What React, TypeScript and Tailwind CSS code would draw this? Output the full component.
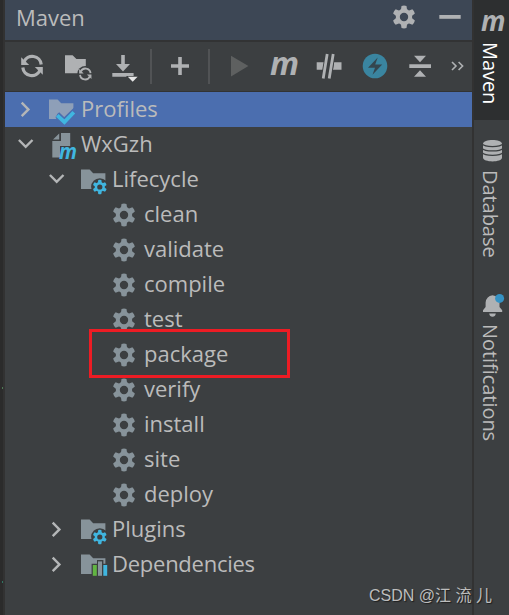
import { type ReactNode } from "react";

type IconKind = "profiles" | "project" | "phases" | "goal" | "dependencies";

type TreeNode = {
  label: string;
  level: 0 | 1 | 2;
  icon: IconKind;
  state?: "open" | "closed";
  selected?: boolean;
};

const NODES: TreeNode[] = [
  { label: "Profiles", level: 0, icon: "profiles", state: "closed", selected: true },
  { label: "WxGzh", level: 0, icon: "project", state: "open" },
  { label: "Lifecycle", level: 1, icon: "phases", state: "open" },
  { label: "clean", level: 2, icon: "goal" },
  { label: "validate", level: 2, icon: "goal" },
  { label: "compile", level: 2, icon: "goal" },
  { label: "test", level: 2, icon: "goal" },
  { label: "package", level: 2, icon: "goal" },
  { label: "verify", level: 2, icon: "goal" },
  { label: "install", level: 2, icon: "goal" },
  { label: "site", level: 2, icon: "goal" },
  { label: "deploy", level: 2, icon: "goal" },
  { label: "Plugins", level: 1, icon: "phases", state: "closed" },
  { label: "Dependencies", level: 1, icon: "dependencies", state: "closed" },
];

const INDENT = { 0: "pl-[5px]", 1: "pl-[36px]", 2: "pl-[68px]" };

const TEETH = [0, 60, 120, 180, 240, 300];

const Gear = ({ cx, cy, scale = 1, color }: { cx: number; cy: number; scale?: number; color: string }) => (
  <g transform={`translate(${cx} ${cy}) scale(${scale})`}>
    <circle r="6.2" fill="none" stroke={color} strokeWidth="4" />
    {TEETH.map((angle) => (
      <path key={angle} d="M-3.1 -7L-2.5 -11.1Q0 -11.9 2.5 -11.1L3.1 -7Z" fill={color} transform={`rotate(${angle})`} />
    ))}
  </g>
);

const Refresh = ({ cx, cy, scale = 1 }: { cx: number; cy: number; scale?: number }) => (
  <g transform={`translate(${cx} ${cy}) scale(${scale})`}>
    {[0, 180].map((angle) => (
      <g key={angle} transform={`rotate(${angle})`}>
        <path d="M-8 -4.2A9 9 0 0 1 9.2 -1.5" fill="none" stroke="#afb1b3" strokeWidth="3.2" />
        <path d="M-10.8 -8.8V-1H-2.8Z" fill="#afb1b3" />
      </g>
    ))}
  </g>
);

const Letter = ({ x, y, size, width, color }: { x: number; y: number; size: number; width: number; color: string }) => (
  <text
    x={x}
    y={y}
    fontSize={size}
    textLength={width}
    lengthAdjust="spacingAndGlyphs"
    fill={color}
    className="font-['Open_Sans','Noto_Sans',sans-serif] font-bold italic"
  >
    m
  </text>
);

const Tool = ({ children }: { children: ReactNode }) => (
  <svg viewBox="0 0 46 49" className="h-[49px] w-[46px] shrink-0 overflow-visible">
    {children}
  </svg>
);

const Separator = ({ className }: { className: string }) => (
  <div className={`h-[35px] w-[2px] shrink-0 bg-[#515355] ${className}`} />
);

const Toolbar = () => (
  <div className="flex h-[49px] items-center pl-1">
    <Tool>
      <Refresh cx={23} cy={24} />
    </Tool>
    <Tool>
      <path d="M10 13.2H17.6L21.4 17H30.8V31.3H10Z" fill="#afb1b3" />
      <circle cx="30.3" cy="32" r="8" fill="#3c3f41" />
      <Refresh cx={30.3} cy={32} scale={0.57} />
    </Tool>
    <Tool>
      <path d="M20.2 13H23.8V22H29L22 29.5L15 22H20.2ZM11.3 31H32.6V34.7H11.3Z" fill="#afb1b3" />
      <path d="M25 34H38.5L31.5 41.2Z" fill="#3c3f41" />
      <path d="M26.8 34.7H36.6L31.7 39.8Z" fill="#e6e6e6" />
    </Tool>
    <Separator className="ml-[3px]" />
    <div className="ml-[5px] flex">
      <Tool>
        <path d="M21.2 15H24.8V22.2H32V25.8H24.8V33H21.2V25.8H14V22.2H21.2Z" fill="#afb1b3" />
      </Tool>
    </div>
    <Separator className="ml-[5px]" />
    <div className="ml-[6px] flex">
      <Tool>
        <path d="M15 13.7L32.4 24L15 34.4Z" fill="#5e6060" />
      </Tool>
      <Tool>
        <Letter x={8} y={33} size={33} width={29} color="#afb1b3" />
      </Tool>
      <Tool>
        <path d="M8.7 20.3H17V27.7H8.7ZM26 20.3H33.5V27.7H25Z" fill="#afb1b3" />
        <path d="M19.2 12L15.2 36.4M25.2 12L21.2 36.4" stroke="#3c3f41" strokeWidth="4.6" />
        <path d="M19.2 12L15.2 36.4M25.2 12L21.2 36.4" stroke="#afb1b3" strokeWidth="2.8" />
      </Tool>
      <Tool>
        <circle cx="21" cy="24" r="12.3" fill="#3a85a0" />
        <path d="M23.7 15.5L14 25.8H21L18.5 32.8L28.2 22.5H21.2Z" fill="#34464f" />
      </Tool>
      <Tool>
        <path d="M14 13.7H26L20 20.2ZM9.3 22.2H31V26H9.3ZM20 28.2L26 34.7H14Z" fill="#afb1b3" />
      </Tool>
    </div>
    <svg viewBox="0 0 20 49" className="-ml-[1px] h-[49px] w-5 shrink-0">
      <path d="M7 20L11 24L7 28M13.6 20L17.6 24L13.6 28" fill="none" stroke="#afb1b3" strokeWidth="1.6" />
    </svg>
  </div>
);

const Chevron = ({ state }: { state?: "open" | "closed" }) => (
  <svg viewBox="0 0 32 35" className="h-[35px] w-8 shrink-0">
    {state === "closed" && (
      <path d="M11.7 10.7L18.4 17.4L11.7 24.1" fill="none" stroke="#b4b6b7" strokeWidth="2.4" />
    )}
    {state === "open" && (
      <path d="M8.9 13L15.7 19.8L22.5 13" fill="none" stroke="#b4b6b7" strokeWidth="2.4" />
    )}
  </svg>
);

const FOLDER = "M2 7.4H10.6L14.2 11.2H26.4V27H2Z";

const NodeIcon = ({ kind }: { kind: IconKind }) => (
  <svg viewBox="0 0 30 35" className="h-[35px] w-[30px] shrink-0 overflow-visible">
    {kind === "profiles" && (
      <>
        <path d={FOLDER} fill="#8e9fb8" />
        <path d="M11 21.4L17.2 27.5L29 16V31H11L8.5 25Z" fill="#4b6eaf" />
        <path d="M11 21.4L17.2 27.5L29 16" fill="none" stroke="#4b6eaf" strokeWidth="3.4" />
        <path d="M10.2 23.4L17.4 30L26.8 20.2" fill="none" stroke="#40b6e0" strokeWidth="3.8" />
      </>
    )}
    {kind === "project" && (
      <>
        <path d="M14 6H23.2V19H13V30.4H5.3V14H14ZM12.2 6.4V12.4H6Z" fill="#87939a" />
        <Letter x={12} y={31.8} size={21} width={18} color="#40b6e0" />
      </>
    )}
    {kind === "phases" && (
      <g transform="translate(1 0)">
        <path d={FOLDER} fill="#87939a" />
        <circle cx="20.8" cy="25" r="8.7" fill="#3c3f41" />
        <Gear cx={20.8} cy={25} scale={0.62} color="#40b6e0" />
      </g>
    )}
    {kind === "goal" && <Gear cx={14} cy={18} color="#87939a" />}
    {kind === "dependencies" && (
      <g transform="translate(1 0)">
        <path d={FOLDER} fill="#87939a" />
        <path d="M12.6 16.8H18V13H24.4V16.8H29V31H12.6Z" fill="#3c3f41" />
        <path d="M13.8 18H17.8V28.8H13.8Z" fill="#62b543" />
        <path d="M19 14.4H23V28.8H19Z" fill="#87939a" />
        <path d="M24.3 18H28.2V28.8H24.3Z" fill="#40b6e0" />
      </g>
    )}
  </svg>
);

const TreeRow = ({ node }: { node: TreeNode }) => (
  <div className={`flex h-[35px] items-start ${INDENT[node.level]} ${node.selected ? "bg-[#4b6eaf]" : ""}`}>
    <Chevron state={node.state} />
    <div className="ml-[5px] flex">
      <NodeIcon kind={node.icon} />
    </div>
    <span
      className={`ml-[4px] text-[22px] leading-[33px] whitespace-nowrap ${node.label.length > 9 ? "tracking-[-0.25px]" : ""}`}
    >
      {node.label}
    </span>
  </div>
);

const SideLabel = ({ children }: { children: string }) => (
  <span className="text-[20px] leading-[33px] tracking-[-0.05px] whitespace-nowrap [writing-mode:vertical-rl]">
    {children}
  </span>
);

const SideBar = () => (
  <div className="flex w-[35px] shrink-0 flex-col bg-[#3c3f41]">
    <div className="flex h-[120px] flex-col items-start bg-[#2d2f30] text-white">
      <svg viewBox="0 0 35 42" className="h-[42px] w-[35px] overflow-visible">
        <Letter x={7} y={30.8} size={28} width={24.5} color="#afb1b3" />
      </svg>
      <SideLabel>Maven</SideLabel>
    </div>
    <div className="flex h-[162px] flex-col items-start">
      <svg viewBox="0 0 35 50" className="h-[50px] w-[35px]">
        <path d="M9 24C9 18.8 28 18.8 28 24V37.5C28 42.7 9 42.7 9 37.5Z" fill="#afb1b3" />
        <path
          d="M8 23.9C11 27.4 26 27.4 29 23.9M8 28.3C11 31.8 26 31.8 29 28.3M8 32.7C11 36.2 26 36.2 29 32.7"
          fill="none"
          stroke="#3c3f41"
          strokeWidth="1.3"
        />
      </svg>
      <SideLabel>Database</SideLabel>
    </div>
    <div className="flex flex-col items-start">
      <svg viewBox="0 0 35 42" className="h-[42px] w-[35px]">
        <path d="M9 30V28.2L11.6 25V20.5Q12.5 14 18.5 13.3Q24.5 14 25.5 20.5V25L28.2 28.2V30ZM15.2 31.5H21.8Q21.3 34.8 18.5 34.8Q15.7 34.8 15.2 31.5Z" fill="#afb1b3" />
        <circle cx="25.6" cy="16.4" r="4.5" fill="#3592c4" />
      </svg>
      <SideLabel>Notifications</SideLabel>
    </div>
  </div>
);

export default function App() {
  return (
    <div className="relative flex h-[615px] w-[509px] overflow-hidden bg-[#3c3f41] font-['Open_Sans','Noto_Sans',sans-serif] text-[#bbbbbb]">
      <div className="w-[5px] shrink-0 border-r-2 border-[#323232] bg-[#2b2b2b]">
        <div className="mt-[387px] ml-[2px] h-[2px] w-px bg-[#4f7a55]" />
        <div className="mt-[192px] ml-[2px] h-[2px] w-px bg-[#2f7563]" />
      </div>
      <div className="flex min-w-0 flex-1 flex-col">
        <div className="flex h-[42px] items-center justify-between border-b-2 border-[#323334] bg-[#3d4755] pl-[11px]">
          <span className="pb-[6px] text-[22px] leading-none">Maven</span>
          <svg viewBox="0 0 80 40" className="h-10 w-20">
            <Gear cx={12} cy={17} color="#afb1b3" />
            <path d="M47.3 15H68.7V18.8H47.3Z" fill="#afb1b3" />
          </svg>
        </div>
        <Toolbar />
        <div className="border-t border-[#323334]">
          {NODES.map((node) => (
            <TreeRow key={node.label} node={node} />
          ))}
        </div>
      </div>
      <div className="w-[2px] shrink-0 bg-[#323232]" />
      <SideBar />

      <div className="absolute top-[329px] left-[89px] h-[49px] w-[201px] border-[3px] border-[#ed1c24]" />
      <div className="absolute top-[584px] left-[369px] font-['Liberation_Sans','Noto_Sans_CJK_SC',sans-serif] text-[16px] leading-6 whitespace-nowrap text-[#bdbdbd] [text-shadow:1px_1px_1px_#1e1e1e]">
        CSDN @江 流 儿
      </div>
    </div>
  );
}
